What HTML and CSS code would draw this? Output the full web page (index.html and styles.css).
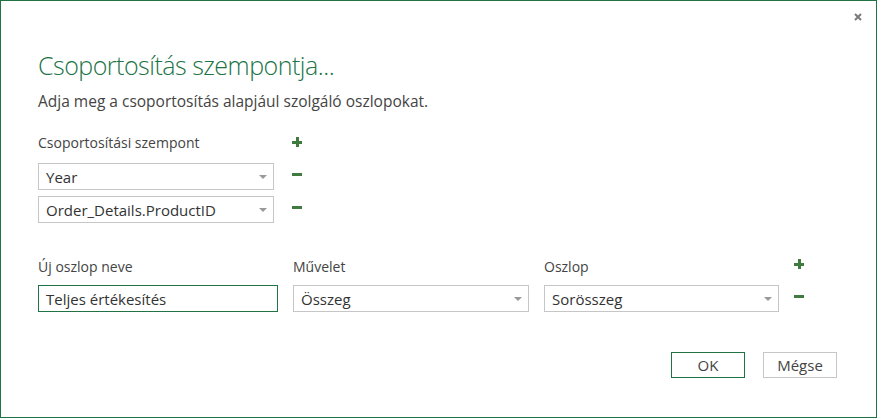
FILE: index.html
```html
<!DOCTYPE html>
<html lang="hu">
<head>
  <meta charset="UTF-8" />
  <title>Csoportosítás szempontja</title>
  <link rel="stylesheet" href="styles.css">
</head>
<body>
  <div class="dialog">
    <div class="titlebar">
      <button class="close" title="Bezárás">
        <svg width="8" height="8" viewBox="0 0 8 8"><path d="M1 1L7 7M7 1L1 7" /></svg>
      </button>
    </div>

    <h1 class="title">Csoportosítás szempontja...</h1>
    <p class="intro">Adja meg a csoportosítás alapjául szolgáló oszlopokat.</p>

    <div class="group-by">
      <label class="label">Csoportosítási szempont</label>
      <span class="icon plus"></span>

      <div class="select"><span>Year</span><i class="arrow"></i></div>
      <span class="icon minus"></span>

      <div class="select"><span>Order_Details.ProductID</span><i class="arrow"></i></div>
      <span class="icon minus"></span>
    </div>

    <div class="aggregates">
      <label class="label">Új oszlop neve</label>
      <label class="label">Művelet</label>
      <label class="label">Oszlop</label>
      <span class="icon plus"></span>

      <div class="textbox">Teljes értékesítés</div>
      <div class="select"><span>Összeg</span><i class="arrow"></i></div>
      <div class="select"><span>Sorösszeg</span><i class="arrow"></i></div>
      <span class="icon minus"></span>
    </div>

    <div class="footer">
      <button class="btn primary">OK</button>
      <button class="btn">Mégse</button>
    </div>
  </div>
</body>
</html>
```

FILE: styles.css
```css
* { box-sizing: border-box; }

html, body {
  margin: 0;
  height: 100%;
}

body {
  font-family: "Open Sans", "Noto Sans", sans-serif;
  color: #444;
  background: #fff;
}

.dialog {
  height: 100vh;
  border: 1px solid #217346;
  padding: 0 0 0 37px;
  display: flex;
  flex-direction: column;
}

.titlebar {
  display: flex;
  justify-content: flex-end;
  align-items: center;
  height: 31px;
  padding-right: 13px;
}

.close {
  border: 0;
  background: none;
  padding: 0;
  width: 10px;
  height: 10px;
  display: flex;
  align-items: center;
  justify-content: center;
  cursor: pointer;
}

.close svg path {
  stroke: #7a7a7a;
  stroke-width: 2;
}

.title {
  margin: 15px 0 0;
  font-weight: 300;
  font-size: 25px;
  letter-spacing: -0.5px;
  line-height: 36px;
  color: #217346;
}

.intro {
  margin: 8px 0 0;
  font-size: 15.5px;
  line-height: 20px;
}

.label {
  font-size: 14px;
  line-height: 20px;
}

/* green +/- buttons */
.icon {
  position: relative;
  width: 10px;
  height: 10px;
  align-self: center;
  transform: translateY(-3px);
}

.icon::before,
.icon::after {
  content: "";
  position: absolute;
  background: #3f7a3f;
}

.icon::before {
  left: 0;
  top: 4px;
  width: 10px;
  height: 3px;
}

.plus::after {
  left: 3.5px;
  top: 0;
  width: 3px;
  height: 10px;
}

.group-by {
  margin-top: 22px;
  display: grid;
  grid-template-columns: 236px 10px;
  column-gap: 18px;
  row-gap: 6px;
  align-items: center;
}

.group-by .label {
  margin-bottom: 4px;
}

.aggregates {
  margin-top: 34px;
  display: grid;
  grid-template-columns: 240px 236px 235px 10px;
  column-gap: 15px;
  row-gap: 8px;
  align-items: center;
}

.select,
.textbox {
  height: 27px;
  border: 1px solid #c6c6c6;
  padding: 0 7px;
  display: flex;
  align-items: center;
  font-size: 15px;
  color: #333;
  background: #fff;
}

.select span { flex: 1; }

.textbox {
  border-color: #217346;
}

.arrow {
  width: 0;
  height: 0;
  border-left: 4px solid transparent;
  border-right: 4px solid transparent;
  border-top: 4px solid #999;
  margin-right: -1px;
}

.footer {
  margin-top: auto;
  margin-bottom: 39px;
  padding-right: 39px;
  display: flex;
  justify-content: flex-end;
  gap: 18px;
}

.btn {
  width: 74px;
  height: 26px;
  border: 1px solid #c6c6c6;
  background: #fff;
  font-family: inherit;
  font-size: 15px;
  color: #444;
  padding: 0;
}

.btn.primary {
  border-color: #217346;
}
```
